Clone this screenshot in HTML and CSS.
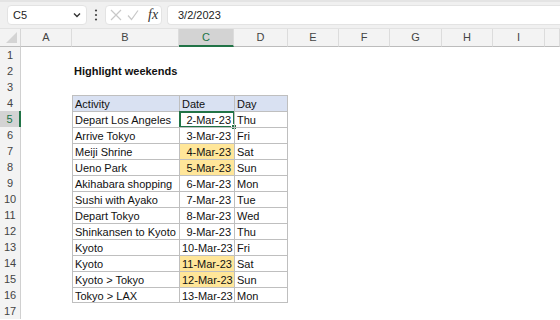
FILE: index.html
```html
<!DOCTYPE html>
<html lang="en">
<head>
  <meta charset="UTF-8">
  <title>Highlight weekends</title>
  <link rel="stylesheet" href="styles.css">
</head>
<body>
  <div class="toolbar">
    <div class="namebox">
      <span>C5</span>
      <svg class="chevron" width="8" height="6" viewBox="0 0 8 6"><path d="M1 1.5 L4 4.5 L7 1.5" fill="none" stroke="#333" stroke-width="1.4"/></svg>
    </div>
    <svg class="dots" width="4" height="14" viewBox="0 0 4 14"><circle cx="2" cy="2.5" r="1.1" fill="#444"/><circle cx="2" cy="7" r="1.1" fill="#444"/><circle cx="2" cy="11.5" r="1.1" fill="#444"/></svg>
    <div class="fxbox">
      <svg width="12" height="12" viewBox="0 0 12 12"><path d="M1 1 L11 11 M11 1 L1 11" stroke="#c8c8c8" stroke-width="1.2"/></svg>
      <svg width="12" height="12" viewBox="0 0 12 12"><path d="M1 6.5 L4.5 10.5 L11 1.5" fill="none" stroke="#c8c8c8" stroke-width="1.2"/></svg>
      <span class="fx">fx</span>
    </div>
    <div class="formula">3/2/2023</div>
  </div>

  <div class="sheet" id="sheet"></div>

  <script>
    const sheet = document.getElementById('sheet');
    const cols = ['A', 'B', 'C', 'D', 'E', 'F', 'G', 'H', 'I', ''];

    const trip = [
      ['Depart Los Angeles', '2-Mar-23', 'Thu'],
      ['Arrive Tokyo', '3-Mar-23', 'Fri'],
      ['Meiji Shrine', '4-Mar-23', 'Sat'],
      ['Ueno Park', '5-Mar-23', 'Sun'],
      ['Akihabara shopping', '6-Mar-23', 'Mon'],
      ['Sushi with Ayako', '7-Mar-23', 'Tue'],
      ['Depart Tokyo', '8-Mar-23', 'Wed'],
      ['Shinkansen to Kyoto', '9-Mar-23', 'Thu'],
      ['Kyoto', '10-Mar-23', 'Fri'],
      ['Kyoto', '11-Mar-23', 'Sat'],
      ['Kyoto > Tokyo', '12-Mar-23', 'Sun'],
      ['Tokyo > LAX', '13-Mar-23', 'Mon']
    ];

    function addCell(cls, text) {
      const div = document.createElement('div');
      div.className = cls;
      if (text) div.textContent = text;
      sheet.appendChild(div);
      return div;
    }

    // column headers
    addCell('corner');
    cols.forEach(c => addCell(c === 'C' ? 'colhead active' : 'colhead', c));

    for (let r = 1; r <= 17; r++) {
      addCell(r === 5 ? 'rowhead active' : 'rowhead', String(r));
      cols.forEach(c => {
        let cls = 'cell';
        let text = '';
        const i = r - 5;

        if (r === 2 && c === 'B') {
          cls += ' title';
          text = 'Highlight weekends';
        }
        if (r >= 4 && r <= 16 && c && 'BCD'.includes(c)) {
          cls += ' tb';
          if (c === 'D') cls += ' last-col';
          if (r === 16) cls += ' last-row';
          if (r === 4) {
            cls += ' head';
            text = {B: 'Activity', C: 'Date', D: 'Day'}[c];
          } else {
            const row = trip[i];
            text = row['BCD'.indexOf(c)];
            if (c === 'C') {
              cls += ' num';
              if (row[2] === 'Sat' || row[2] === 'Sun') cls += ' weekend';
            }
          }
        }

        const cell = addCell(cls, text);
        if (r === 5 && c === 'C') {
          const sel = document.createElement('div');
          sel.className = 'selection';
          sel.innerHTML = '<span class="handle"></span>';
          cell.appendChild(sel);
        }
      });
    }
  </script>
</body>
</html>
```

FILE: styles.css
```css
* {
  box-sizing: border-box;
}

html, body {
  margin: 0;
  height: 100%;
  overflow: hidden;
  background: white;
}

body {
  font-family: "Liberation Sans", Arial, sans-serif;
  font-size: 11px;
  color: #222;
}

.toolbar {
  height: 29px;
  display: flex;
  align-items: center;
  padding: 0 0 0 7px;
  background: #f0f0f0;
  border-top: 2px solid #e4e4e4;
  border-bottom: 1px solid #e2e2e2;
}

.namebox {
  width: 80px;
  height: 20px;
  display: flex;
  align-items: center;
  justify-content: space-between;
  padding: 0 5px 0 5px;
  background: white;
  border: 1px solid #e3e3e3;
  border-radius: 4px;
  color: #222;
}

.dots {
  margin: 0 7px 0 7px;
}

.fxbox {
  width: 57px;
  height: 20px;
  display: flex;
  align-items: center;
  gap: 5px;
  padding: 0 0 0 4px;
  background: white;
  border: 1px solid #e3e3e3;
  border-radius: 4px;
}

.fx {
  font-family: "Liberation Serif", "Times New Roman", serif;
  font-style: italic;
  font-size: 14px;
  color: #333;
  margin-left: 4px;
}

.formula {
  flex: 1;
  height: 20px;
  margin-left: 5px;
  padding: 3px 0 0 10px;
  background: white;
  border: 1px solid #e3e3e3;
  border-right: none;
  border-radius: 4px 0 0 4px;
  color: #222;
}

.sheet {
  display: grid;
  grid-template-columns: 21px 51px 107px 55px 54px 51px 51px 52px 51px 52px 15px;
  grid-template-rows: 18px;
  grid-auto-rows: 16px;
}

.corner {
  position: relative;
  background: #f3f3f3;
  border-right: 1px solid #d6d6d6;
  border-bottom: 1px solid #bcbcbc;
}

.corner::after {
  content: "";
  position: absolute;
  right: 3px;
  bottom: 3px;
  border-left: 11px solid transparent;
  border-bottom: 11px solid #d4d4d4;
}

.colhead {
  background: #f3f3f3;
  border-right: 1px solid #dcdcdc;
  border-bottom: 1px solid #bcbcbc;
  color: #444;
  text-align: center;
  line-height: 17px;
}

.colhead.active {
  background: #d3d3d3;
  border-bottom: 2px solid #217346;
  color: #217346;
}

.rowhead {
  background: #f3f3f3;
  border-right: 1px solid #d0d0d0;
  color: #444;
  text-align: center;
  line-height: 16px;
}

.rowhead.active {
  background: #d3d3d3;
  border-right: 2px solid #217346;
  color: #217346;
}

.cell {
  position: relative;
  padding: 1px 2px 0 2px;
  line-height: 15px;
  white-space: nowrap;
  color: #111;
}

.title {
  font-weight: bold;
  overflow: visible;
}

.tb {
  border-top: 1px solid #bfbfbf;
  border-left: 1px solid #bfbfbf;
}

.last-col {
  border-right: 1px solid #bfbfbf;
}

.last-row {
  border-bottom: 1px solid #bfbfbf;
}

.head {
  background: #d9e1f2;
}

.num {
  text-align: right;
  padding-right: 3px;
}

.weekend {
  background: #ffe699;
}

.selection {
  position: absolute;
  top: -1px;
  left: -1px;
  right: -1px;
  bottom: -1px;
  border: 2px solid #217346;
}

.handle {
  position: absolute;
  right: -4px;
  bottom: -4px;
  width: 6px;
  height: 6px;
  background: #217346;
  border: 1px solid white;
}
```
